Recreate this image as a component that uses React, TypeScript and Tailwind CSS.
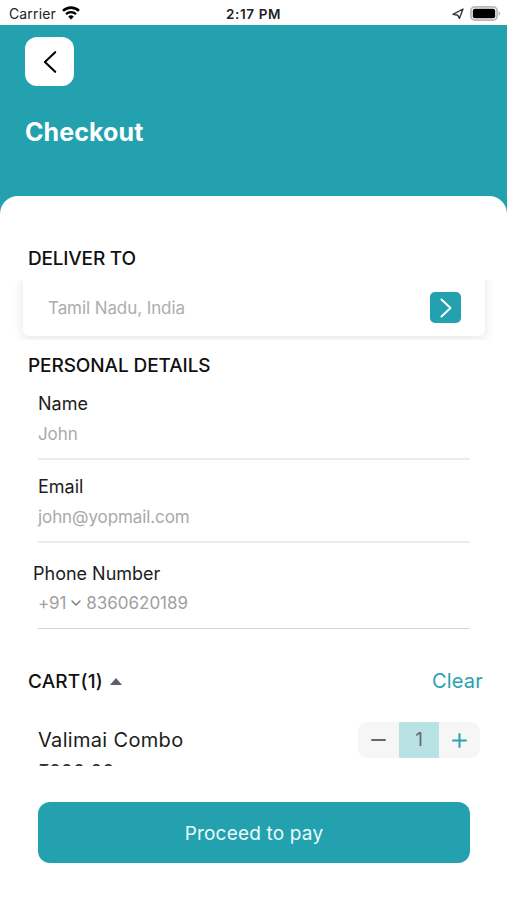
import type { ReactNode } from 'react'

function StatusBar() {
  return (
    <div className="grid h-[25px] grid-cols-3 items-center bg-white pt-[2px] text-[#222]">
      <div className="flex items-center gap-[6px] pl-[9px]">
        <span className="text-[14px] leading-5 tracking-[0.01em]">Carrier</span>
        <svg width="18" height="14" viewBox="0 0 18 14" fill="none" className="mb-[2px]">
          <path d="M1 4.9a11.5 11.5 0 0 1 16 0" stroke="#000" strokeWidth="2.6" />
          <path d="M4 8.1a7.3 7.3 0 0 1 10 0" stroke="#000" strokeWidth="2.3" />
          <path d="M9 13.6 6.2 10.7a4 4 0 0 1 5.6 0z" fill="#000" />
        </svg>
      </div>
      <span className="text-center text-[13.5px] font-semibold leading-5 tracking-[0.045em]">2:17 PM</span>
      <div className="flex items-center justify-end gap-[6px] pr-[6px]">
        <svg width="12" height="12" viewBox="0 0 12 12" fill="none">
          <path d="M11 1 7.4 10.4 5.8 7.2 1 6.4z" stroke="#333" strokeWidth="1.4" strokeLinejoin="round" />
        </svg>
        <svg width="31" height="15" viewBox="0 0 31 15" className="mb-px">
          <rect x="0.9" y="0.9" width="26.2" height="13.2" rx="4" fill="#fff" stroke="#b8b8b8" strokeWidth="1.8" />
          <rect x="2.8" y="2.8" width="22.4" height="9.4" rx="2" fill="#000" />
          <path d="M28.6 5.2c2.2.8 2.2 3.6 0 4.4z" fill="#b4b4b4" />
        </svg>
      </div>
    </div>
  )
}

function Field({ label, children, line }: { label: string; children: ReactNode; line: string }) {
  return (
    <div className={`ml-[38px] mr-[37px] border-b-2 ${line}`}>
      <div className="text-[18px] leading-6 text-[#1c1c1c]">{label}</div>
      <div className="mt-[6px] h-[36px] text-[17px] leading-6 tracking-[-0.005em] text-[#a9a9a9]">{children}</div>
    </div>
  )
}

function Stepper() {
  return (
    <div className="flex h-[36px] w-[122px] overflow-hidden rounded-[9px] bg-[#f6f6f6]">
      <button type="button" aria-label="Remove one" className="flex w-[41px] items-center justify-center">
        <span className="h-[2px] w-[15px] rounded-full bg-[#686570]" />
      </button>
      <span className="flex w-[40px] items-center justify-center bg-[#b9e2e4] pt-px text-[19px] text-[#686b73]">1</span>
      <button type="button" aria-label="Add one" className="flex w-[41px] items-center justify-center">
        <svg width="15" height="15" viewBox="0 0 15 15" stroke="#29a2ae" strokeWidth="2" strokeLinecap="round">
          <path d="M7.5 1v13M1 7.5h13" />
        </svg>
      </button>
    </div>
  )
}

export default function App() {
  return (
    <div className="flex h-[900px] w-[507px] flex-col overflow-hidden bg-[#24a1ae] font-['Inter','Noto_Sans',sans-serif]">
      <StatusBar />

      <header className="h-[171px] shrink-0 pl-[25px] pt-[12px]">
        <button
          type="button"
          aria-label="Back"
          className="flex size-[49px] items-center justify-center rounded-[12px] bg-white"
        >
          <svg width="14" height="24" viewBox="0 0 14 24" fill="none" className="block">
            <path d="M12.2 2.2 1.9 12l10.3 9.8" stroke="#000" strokeWidth="2.1" strokeLinecap="round" strokeLinejoin="round" />
          </svg>
        </button>
        <h1 className="mt-[30px] text-[25px] font-bold leading-8 tracking-[0.004em] text-white">Checkout</h1>
      </header>

      <main className="flex flex-1 flex-col rounded-t-[18px] bg-white">
        <div className="h-[570px] overflow-hidden">
          <h2 className="ml-[28px] pt-[51px] text-[19px] font-medium leading-6 tracking-[-0.01em] text-[#111]">
            DELIVER TO
          </h2>

          {/* the row clips the card's shadow at its own edges */}
          <div className="mt-[9px] h-[60px] overflow-hidden px-[23px]">
            <div className="-mt-[4px] flex h-[60px] w-[462px] items-center justify-between rounded-[6px] bg-white pl-[25px] pr-[24px] pt-[3px] shadow-[0_2px_10px_2px_rgba(0,0,0,0.08)]">
              <span className="text-[17px] leading-6 tracking-[-0.005em] text-[#adadad]">Tamil Nadu, India</span>
              <button
                type="button"
                aria-label="Change address"
                className="flex size-[31px] items-center justify-center rounded-[5px] bg-[#24a1ae]"
              >
                <svg width="12" height="20" viewBox="0 0 12 20" fill="none">
                  <path d="m1.5 1.5 9 8.5-9 8.5" stroke="#fff" strokeWidth="2" strokeLinecap="round" strokeLinejoin="round" />
                </svg>
              </button>
            </div>
          </div>

          <h2 className="ml-[28px] mt-[13px] pt-px text-[19px] font-medium leading-6 tracking-[-0.005em] text-[#111]">
            PERSONAL DETAILS
          </h2>

          <div className="mt-[14px]">
            <Field label="Name" line="border-[#ececec]">John</Field>
          </div>
          <div className="mt-[15px]">
            <Field label="Email" line="border-[#ececec]">john@yopmail.com</Field>
          </div>

          <div className="mt-[19px]">
            <div className="ml-[33px] text-[18px] leading-6 text-[#1c1c1c]">Phone Number</div>
            <div className="ml-[38px] mr-[37px] mt-[5px] flex h-[38px] items-start border-b border-[#d4d4d4] text-[17px] leading-6 text-[#a0a0a0]">
              <span className="tracking-[-0.01em]">+91</span>
              <svg width="10" height="6" viewBox="0 0 10 6" fill="none" className="ml-[5px] mr-[5px] mt-[9px]">
                <path d="m1 1 4 4 4-4" stroke="#777" strokeWidth="1.4" strokeLinecap="round" strokeLinejoin="round" />
              </svg>
              <span>8360620189</span>
            </div>
          </div>

          <div className="ml-[28px] mr-[24px] mt-[40px] flex h-6 items-center justify-between">
            <div className="flex items-center">
              <h2 className="pt-px text-[19px] font-medium leading-6 tracking-[0.01em] text-[#111]">CART(1)</h2>
              <svg width="12" height="7" viewBox="0 0 12 7" className="ml-[7px]">
                <path d="M6 0 12 7H0z" fill="#5f5e6c" />
              </svg>
            </div>
            <button type="button" className="text-[20px] leading-6 tracking-[0.01em] text-[#29a2ae]">
              Clear
            </button>
          </div>

          <div className="ml-[38px] mr-[27px] mt-[29px] flex h-[36px] items-center justify-between">
            <span className="text-[20px] leading-6 tracking-[0.016em] text-[#1c1c1c]">Valimai Combo</span>
            <Stepper />
          </div>
          <div className="ml-[39px] pt-[2px] text-[18px] font-medium leading-6 tracking-[0.03em] text-[#333]">₹200.00</div>
        </div>

        <button
          type="button"
          className="ml-[38px] mr-[37px] mt-[36px] h-[61px] rounded-[12px] bg-[#24a1ae] pt-[3px] text-[19px] tracking-[0.01em] text-[#e9fbfc]"
        >
          Proceed to pay
        </button>
      </main>
    </div>
  )
}
